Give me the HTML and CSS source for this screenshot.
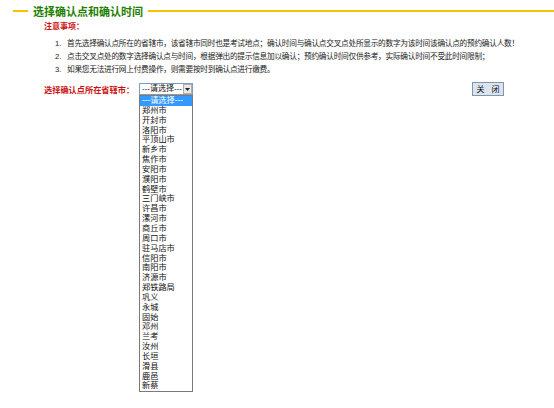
FILE: index.html
```html
<!DOCTYPE html>
<html>
<head>
<meta charset="utf-8">
<link rel="stylesheet" href="styles.css">
</head>
<body>
<div class="page">
  <div class="header">
    <span class="line-short"></span>
    <span class="title">选择确认点和确认时间</span>
    <span class="line-long"></span>
  </div>
  <div class="notice-title">注意事项：</div>
  <ol class="notes">
    <li><span class="num">1.</span><span class="txt">首先选择确认点所在的省辖市，该省辖市同时也是考试地点；确认时间与确认点交叉点处所显示的数字为该时间该确认点的预约确认人数！</span></li>
    <li><span class="num">2.</span><span class="txt">点击交叉点处的数字选择确认点与时间，根据弹出的提示信息加以确认；预约确认时间仅供参考，实际确认时间不受此时间限制；</span></li>
    <li><span class="num">3.</span><span class="txt">如果您无法进行网上付费操作，则需要按时到确认点进行缴费。</span></li>
  </ol>
  <div class="select-row">
    <span class="label">选择确认点所在省辖市：</span>
    <div class="select-wrap">
      <div class="select">
        <span class="select-text">---请选择---</span>
        <span class="arrow"><svg width="7" height="10" viewBox="0 0 7 10"><path d="M1 4 L6 4 L3.5 7 Z" fill="#222"/></svg></span>
      </div>
      <ul class="dropdown">
        <li class="selected">---请选择---</li>
        <li>郑州市</li>
        <li>开封市</li>
        <li>洛阳市</li>
        <li>平顶山市</li>
        <li>新乡市</li>
        <li>焦作市</li>
        <li>安阳市</li>
        <li>濮阳市</li>
        <li>鹤壁市</li>
        <li>三门峡市</li>
        <li>许昌市</li>
        <li>漯河市</li>
        <li>商丘市</li>
        <li>周口市</li>
        <li>驻马店市</li>
        <li>信阳市</li>
        <li>南阳市</li>
        <li>济源市</li>
        <li>郑铁路局</li>
        <li>巩义</li>
        <li>永城</li>
        <li>固始</li>
        <li>邓州</li>
        <li>兰考</li>
        <li>汝州</li>
        <li>长垣</li>
        <li>滑县</li>
        <li>鹿邑</li>
        <li>新蔡</li>
      </ul>
    </div>
    <button class="close-btn"><span>关</span><span>闭</span></button>
  </div>
</div>
</body>
</html>
```
FILE: styles.css
```css
html, body {
  margin: 0;
  padding: 0;
  background: #ffffff;
}
body {
  font-family: "Noto Sans CJK SC", "DejaVu Sans", sans-serif;
  width: 554px;
  height: 408px;
  overflow: hidden;
}
.page {
  padding-top: 4px;
}
.header {
  display: flex;
  align-items: center;
  height: 14px;
  padding-left: 13px;
}
.line-short {
  width: 15px;
  height: 2px;
  background: #f2c200;
}
.title {
  margin: 0 5px;
  font-size: 11px;
  font-weight: bold;
  color: #1f7f00;
  line-height: 14px;
}
.line-long {
  flex: 1;
  height: 2px;
  background: #f2c200;
}
.notice-title {
  margin-left: 44px;
  margin-top: 2px;
  font-size: 8px;
  font-weight: bold;
  color: #cc1111;
  line-height: 12px;
}
.notes {
  list-style: none;
  margin: 5px 0 0 0;
  padding: 0 0 0 55px;
}
.notes li {
  display: flex;
  font-family: "Liberation Sans", "Noto Sans CJK SC", sans-serif;
  font-size: 7.7px;
  line-height: 13px;
  height: 13px;
  color: #222;
  white-space: nowrap;
}
.txt {
  letter-spacing: -0.28px;
}
.num {
  width: 12px;
  flex: none;
}
.select-row {
  display: flex;
  align-items: center;
  margin-top: 6px;
  padding-left: 44px;
  height: 14px;
}
.label {
  font-size: 8.2px;
  font-weight: bold;
  color: #cc1111;
  width: 95px;
  white-space: nowrap;
}
.select-wrap {
  position: relative;
  width: 54px;
}
.select {
  box-sizing: border-box;
  width: 54px;
  height: 12px;
  border: 1px solid #7f9db9;
  display: flex;
  align-items: center;
  background: #fff;
}
.select-text {
  flex: 1;
  font-family: "Liberation Sans", "Noto Sans CJK SC", sans-serif;
  font-size: 8px;
  line-height: 10px;
  color: #111;
  padding-left: 2px;
  white-space: nowrap;
  overflow: hidden;
}
.arrow {
  width: 9px;
  height: 10px;
  flex: none;
  box-sizing: border-box;
  border: 1px solid #b0b0b0;
  background: #e8e8e8;
  display: flex;
  align-items: center;
  justify-content: center;
}
.arrow svg {
  display: block;
}
.dropdown {
  position: absolute;
  left: 0;
  top: 12px;
  box-sizing: border-box;
  width: 54px;
  margin: 0;
  padding: 0;
  list-style: none;
  border: 1px solid #7a7a7a;
  background: #fff;
}
.dropdown li {
  font-family: "Liberation Sans", "Noto Sans CJK SC", sans-serif;
  font-size: 8.2px;
  line-height: 9.85px;
  height: 9.85px;
  padding-left: 2px;
  color: #111;
  white-space: nowrap;
}
.dropdown li.selected {
  background: #3399ff;
  color: #ffffff;
}
.close-btn {
  margin-left: auto;
  margin-right: 50px;
  width: 32px;
  height: 14px;
  padding: 0;
  display: flex;
  align-items: center;
  justify-content: center;
  gap: 7px;
  font-family: "Noto Sans CJK SC", sans-serif;
  font-size: 8px;
  line-height: 12px;
  color: #111;
  background: #dbe4ee;
  border: 1px solid #8096ad;
  border-radius: 0;
}
```
